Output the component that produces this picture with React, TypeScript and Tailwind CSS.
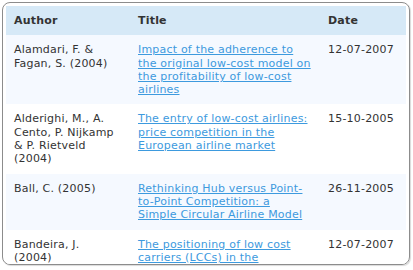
import React from 'react';

interface Article {
  author: string;
  title: string;
  date: string;
}

const ARTICLES: Article[] = [
  {
    author: 'Alamdari, F. & Fagan, S. (2004)',
    title: 'Impact of the adherence to the original low-cost model on the profitability of low-cost airlines',
    date: '12-07-2007',
  },
  {
    author: 'Alderighi, M., A. Cento, P. Nijkamp & P. Rietveld (2004)',
    title: 'The entry of low-cost airlines: price competition in the European airline market',
    date: '15-10-2005',
  },
  {
    author: 'Ball, C. (2005)',
    title: 'Rethinking Hub versus Point-to-Point Competition: a Simple Circular Airline Model',
    date: '26-11-2005',
  },
  {
    author: 'Bandeira, J. (2004)',
    title: 'The positioning of low cost carriers (LCCs) in the European market',
    date: '12-07-2007',
  },
];

export default function App() {
  return (
    <div className="w-[413px] h-[270px] bg-white pt-[2px] pl-[2px] overflow-hidden">
      <div
        className="w-[408px] h-[263px] border border-[#8c8c8c] rounded-[8px] p-[3px] overflow-hidden shadow-[1px_1px_1px_rgba(0,0,0,0.15)] text-[11px] leading-[13.3px] tracking-[0.2px] text-[#333]"
        style={{ fontFamily: '"DejaVu Sans", Verdana, sans-serif' }}
      >
        <table className="w-[400px] table-fixed border-collapse">
          <colgroup>
            <col className="w-[124px]" />
            <col className="w-[190px]" />
            <col className="w-[86px]" />
          </colgroup>
          <thead>
            <tr className="bg-[#d6e9f7]">
              <th className="text-left font-bold px-2 py-2">Author</th>
              <th className="text-left font-bold px-2 py-2">Title</th>
              <th className="text-left font-bold px-2 py-2">Date</th>
            </tr>
          </thead>
          <tbody>
            {ARTICLES.map((a, i) => (
              <tr key={a.title} className={i % 2 === 0 ? 'bg-[#f5f9ff]' : 'bg-white'}>
                <td className="align-top pl-2 pr-3 py-2">{a.author}</td>
                <td className="align-top px-2 py-2">
                  <a href="#" className="text-[#3d9ade] underline">
                    {a.title}
                  </a>
                </td>
                <td className="align-top px-2 py-2">{a.date}</td>
              </tr>
            ))}
          </tbody>
        </table>
      </div>
    </div>
  );
}
